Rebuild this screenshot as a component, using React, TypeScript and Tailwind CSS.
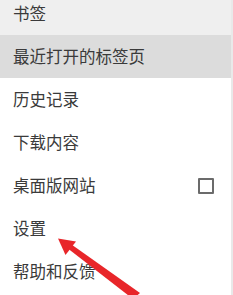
import React from 'react';

type Item = { label: string; bg?: string; checkbox?: boolean };

const items: Item[] = [
  { label: '书签', bg: 'bg-[#efefef]' },
  { label: '最近打开的标签页', bg: 'bg-[#dcdcdc]' },
  { label: '历史记录' },
  { label: '下载内容' },
  { label: '桌面版网站', checkbox: true },
  { label: '设置' },
  { label: '帮助和反馈' },
];

export default function App() {
  return (
    <div className="relative w-[233px] h-[295px] overflow-hidden bg-white font-['Noto_Sans_CJK_SC',sans-serif]">
      <div className="flex h-full">
        <div className="flex-1 flex flex-col -mt-[8px]">
          {items.map((item) => (
            <div
              key={item.label}
              className={`h-[43px] shrink-0 flex items-center justify-between pl-[13px] pr-[17px] ${item.bg ?? 'bg-white'}`}
            >
              <span className="text-[16.5px] leading-none text-[#3a3a3a]">{item.label}</span>
              {item.checkbox && (
                <span className="w-[16px] h-[16px] border-2 border-[#6b6b6b] rounded-[1px]" />
              )}
            </div>
          ))}
        </div>
        <div className="w-[2px] bg-[#e9e9e9]" />
      </div>

      {/* red annotation arrow */}
      <svg className="absolute left-0 top-0" width="233" height="295" viewBox="0 0 233 295">
        <polygon points="58,238.5 76,241.5 65.5,255" fill="#e8262a" />
        <polygon points="71.5,244.5 68.5,249 133,299 140,293" fill="#e8262a" />
      </svg>
    </div>
  );
}
